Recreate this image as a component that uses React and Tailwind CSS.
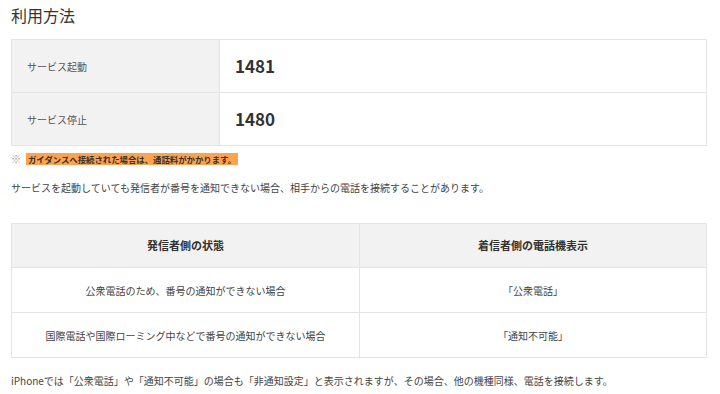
const CODES = [
  { label: "サービス起動", code: "1481" },
  { label: "サービス停止", code: "1480" },
];

const CASES = [
  { caller: "公衆電話のため、番号の通知ができない場合", display: "「公衆電話」" },
  { caller: "国際電話や国際ローミング中などで番号の通知ができない場合", display: "「通知不可能」" },
];

export default function App() {
  return (
    <div
      className="w-[720px] h-[394px] overflow-hidden bg-white pl-[11px] pr-[13px] text-[#444]"
      style={{ fontFamily: '"Noto Sans CJK JP", "Noto Sans", sans-serif' }}
    >
      <h2 className="h-[30px] pt-[2px] text-[16px] leading-[26px] text-[#333]">利用方法</h2>

      <table className="mt-[9px] w-[696px] border-collapse">
        <tbody>
          {CODES.map((row) => (
            <tr key={row.code} className="h-[53px]">
              <th className="w-[208px] border border-[#e4e4e4] bg-[#f2f2f2] pl-[15px] text-left text-[10px] font-normal text-[#555]">
                {row.label}
              </th>
              <td className="border border-[#e4e4e4] pl-[15px] text-[17px] font-bold text-[#333]">
                {row.code}
              </td>
            </tr>
          ))}
        </tbody>
      </table>

      <p className="mt-[7px] flex items-center text-[8.4px] leading-[12px]">
        <span className="text-[#999] mr-[5px] text-[10px]">※</span>
        <span className="bg-[#ffa24f] px-[2px] font-bold text-[#333]">ガイダンスへ接続された場合は、通話料がかかります。</span>
      </p>

      <p className="mt-[15px] text-[10px] leading-[16px]">
        サービスを起動していても発信者が番号を通知できない場合、相手からの電話を接続することがあります。
      </p>

      <table className="mt-[27px] w-[696px] border-collapse text-center">
        <thead>
          <tr className="h-[44px] bg-[#f2f2f2]">
            <th className="w-[348px] border border-[#e4e4e4] text-[11px] font-bold text-[#333]">発信者側の状態</th>
            <th className="border border-[#e4e4e4] text-[11px] font-bold text-[#333]">着信者側の電話機表示</th>
          </tr>
        </thead>
        <tbody>
          {CASES.map((row) => (
            <tr key={row.display} className="h-[45px]">
              <td className="border border-[#e4e4e4] text-[10px]">{row.caller}</td>
              <td className="border border-[#e4e4e4] text-[10px]">{row.display}</td>
            </tr>
          ))}
        </tbody>
      </table>

      <p className="mt-[15px] text-[10px] leading-[16px]">
        iPhoneでは「公衆電話」や「通知不可能」の場合も「非通知設定」と表示されますが、その場合、他の機種同様、電話を接続します。
      </p>
    </div>
  );
}
